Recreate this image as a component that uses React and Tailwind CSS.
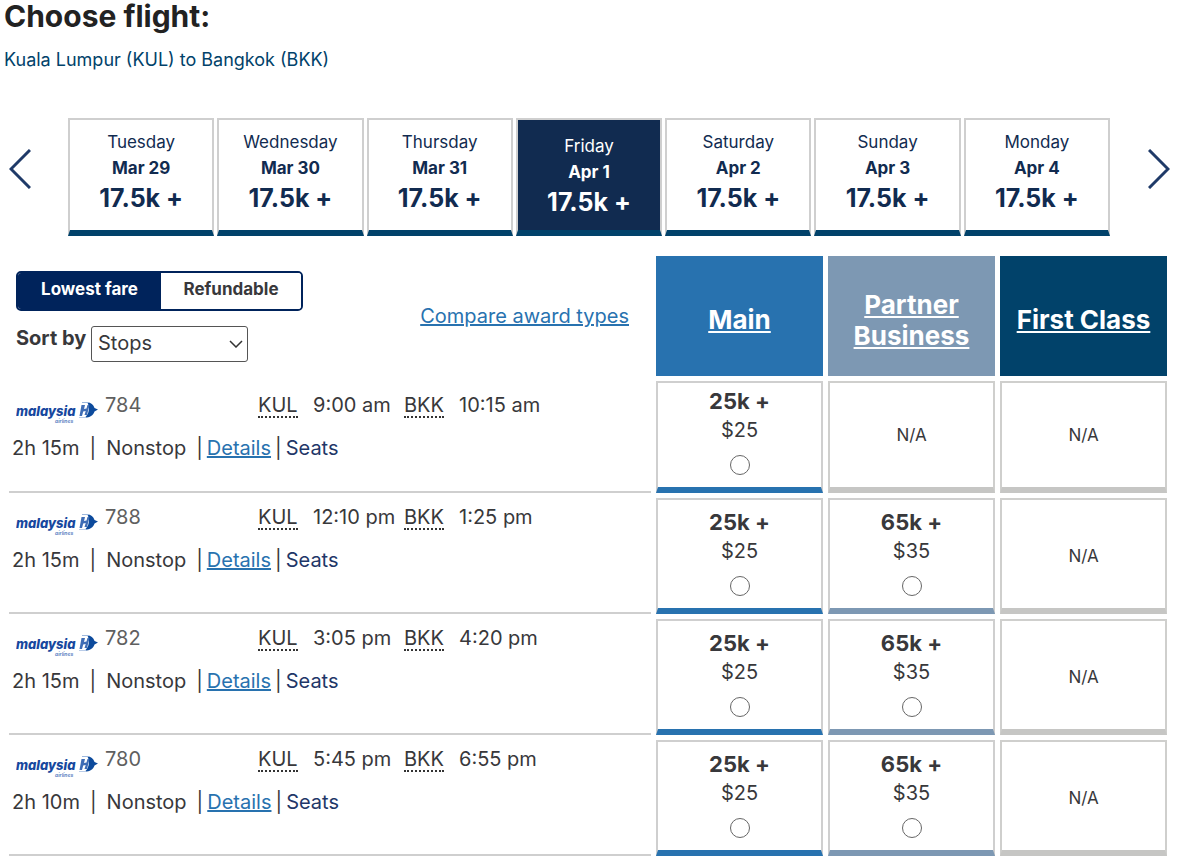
import React, { useState } from 'react';

const dates = [
  { day: 'Tuesday', date: 'Mar 29', price: '17.5k +' },
  { day: 'Wednesday', date: 'Mar 30', price: '17.5k +' },
  { day: 'Thursday', date: 'Mar 31', price: '17.5k +' },
  { day: 'Friday', date: 'Apr 1', price: '17.5k +' },
  { day: 'Saturday', date: 'Apr 2', price: '17.5k +' },
  { day: 'Sunday', date: 'Apr 3', price: '17.5k +' },
  { day: 'Monday', date: 'Apr 4', price: '17.5k +' },
];

const main = { points: '25k +', fee: '$25' };
const business = { points: '65k +', fee: '$35' };

const flights = [
  { number: '784', departs: '9:00 am', arrives: '10:15 am', duration: '2h 15m', main, business: null, first: null },
  { number: '788', departs: '12:10 pm', arrives: '1:25 pm', duration: '2h 15m', main, business, first: null },
  { number: '782', departs: '3:05 pm', arrives: '4:20 pm', duration: '2h 15m', main, business, first: null },
  { number: '780', departs: '5:45 pm', arrives: '6:55 pm', duration: '2h 10m', main, business, first: null },
];

const cabins = [
  { key: 'main', label: 'Main', head: 'bg-[#2872af]', bar: 'border-b-[#2872af]' },
  { key: 'business', label: 'Partner Business', head: 'bg-[#7d98b3]', bar: 'border-b-[#7d98b3]' },
  { key: 'first', label: 'First Class', head: 'bg-[#01426a]', bar: 'border-b-[#01426a]' },
];

const Arrow = ({ points }) => (
  <svg viewBox="0 0 22 40" className="w-[22px] h-10" fill="none" stroke="#1f3a68" strokeWidth="3">
    <polyline points={points} />
  </svg>
);

const MalaysiaLogo = () => (
  <svg viewBox="0 0 84 26" className="w-[84px] h-[26px] mt-2 shrink-0" role="img" aria-label="Malaysia Airlines">
    <text x="0" y="17" fontSize="13" fontWeight="800" fontStyle="italic" fill="#17479e">malaysia</text>
    <text x="39" y="24" fontSize="5" fontWeight="700" fontStyle="italic" fill="#5f86c4">airlines</text>
    <path d="M71 3 C75 3.500 77.500 5.500 78.500 9 L82 10.500 L78.500 12.500 C77 16.500 74 18.500 69 18.500 C73 15 74.500 8 71 3 Z" fill="#0c4a9c" />
    <path d="M66.500 6 L69 6 L68 10 L70.500 9.500 L71.500 6 L73.500 6 L71 16 L68.500 16 L69.700 12 L67.200 12.500 L66 17 L63.500 17 L65.500 6 Z" fill="#3f6db5" />
    <path d="M66 3.500 L73 3.500" fill="none" stroke="#9db8de" />
    <path d="M63 18.500 L70 18.500" fill="none" stroke="#b9cce8" />
  </svg>
);

const DateCard = ({ item, selected, onSelect }) => (
  <button
    type="button"
    onClick={onSelect}
    aria-pressed={selected}
    className={`flex flex-col items-center h-[118px] border-2 border-[#cfcfcf] border-b-6 border-b-[#01426a] ${
      selected ? 'bg-[#112b50] text-white pt-[14px]' : 'bg-white text-[#112b50] pt-[10px]'
    }`}
  >
    <span className="text-[17px] leading-[25px]">{item.day}</span>
    <span className="text-[17px] leading-[26px] font-bold">{item.date}</span>
    <span className="text-[25px] leading-[34px] font-bold">{item.price}</span>
  </button>
);

const FareCell = ({ fare, cabin, flight, short }) => {
  if (!fare) {
    return (
      <td className={`border-2 border-[#cfcfcd] border-b-6 border-b-[#c6c6c4] p-0 text-center align-middle text-[17px] ${short ? 'pt-[2px]' : 'pt-[6px]'}`}>
        N/A
      </td>
    );
  }
  return (
    <td className={`border-2 border-[#cfcfcf] border-b-6 ${cabin.bar} p-0 align-top`}>
      <label className={`flex flex-col items-center ${short ? 'pt-1' : 'pt-2'}`}>
        <span className="text-[22px] leading-[29px] font-bold">{fare.points}</span>
        <span className="text-xl leading-[29px]">{fare.fee}</span>
        <input
          type="radio"
          name="fare"
          aria-label={`${cabin.label} fare on flight ${flight.number}`}
          className="appearance-none size-5 mt-[10px] rounded-full border border-[#666] bg-white checked:border-[6px] checked:border-[#2872af]"
        />
      </label>
    </td>
  );
};

const Airport = ({ code, name }) => (
  <div>
    <abbr title={name} className="inline-block leading-[21px] border-b-2 border-dotted border-[#333] no-underline">
      {code}
    </abbr>
  </div>
);

const FlightRow = ({ flight, first }) => (
  <tr className={first ? 'h-28' : 'h-[116px]'}>
    <td className={`border-b-2 border-[#cfcfcf] p-0 align-top ${first ? 'pt-[10px]' : 'pt-[5px]'}`}>
      <div className="grid grid-cols-[242px_55px_91px_55px_auto] pl-[7px] h-7 text-xl leading-7">
        <div className="flex gap-[5px] text-[#5f5f5f]">
          <MalaysiaLogo />
          {flight.number}
        </div>
        <Airport code="KUL" name="Kuala Lumpur" />
        <div>{flight.departs}</div>
        <Airport code="BKK" name="Bangkok" />
        <div>{flight.arrives}</div>
      </div>
      <div className="flex mt-[15px] pl-[3px] text-xl leading-7">
        <span>{flight.duration}</span>
        <span className="px-[10px]">|</span>
        <span>Nonstop</span>
        <span className="pl-[10px] pr-1">|</span>
        <a href="#details" className="text-[#2872af] underline">Details</a>
        <span className="px-1">|</span>
        <a href="#seats" className="text-[#1f3768]">Seats</a>
      </div>
    </td>
    {cabins.map((cabin) => (
      <FareCell key={cabin.key} fare={flight[cabin.key]} cabin={cabin} flight={flight} short={first} />
    ))}
  </tr>
);

const App = () => {
  const [selected, setSelected] = useState(3);
  const [refundable, setRefundable] = useState(false);

  return (
    <main className="bg-white font-[Inter,sans-serif] text-[#38383b]">
      <header className="pl-1">
        <h1 className="text-3xl leading-8 font-bold text-[#222]">Choose flight:</h1>
        <p className="mt-4 text-lg leading-6 text-[#01426a]">Kuala Lumpur (KUL) to Bangkok (BKK)</p>
      </header>

      <nav className="flex items-start mt-[46px] pl-[9px] pr-[30px]" aria-label="Dates">
        <button type="button" aria-label="Previous dates" className="mt-[31px]">
          <Arrow points="21,1 2,20 21,39" />
        </button>
        <div className="grid grid-cols-7 gap-[3px] flex-1 ml-[37px] mr-[38px]">
          {dates.map((item, index) => (
            <DateCard
              key={item.date}
              item={item}
              selected={index === selected}
              onSelect={() => setSelected(index)}
            />
          ))}
        </div>
        <button type="button" aria-label="Next dates" className="mt-[31px]">
          <Arrow points="1,1 20,20 1,39" />
        </button>
      </nav>

      <div className="pl-1 pr-7 mt-[15px]">
        <table className="w-full table-fixed border-separate border-spacing-[5px]">
          <colgroup>
            <col />
            <col className="w-[167px]" />
            <col className="w-[167px]" />
            <col className="w-[167px]" />
          </colgroup>
          <thead>
            <tr className="h-[120px]">
              <td className="p-0 align-top">
                <div className="flex items-center justify-between pl-[7px] pr-[22px] h-[120px]">
                  <div className="h-full pt-[15px]">
                    <div className="flex w-[287px] h-10 rounded-[5px] border-2 border-[#00235b] overflow-hidden text-[17px] font-bold">
                      <button
                        type="button"
                        onClick={() => setRefundable(false)}
                        className={`w-[143px] pb-[2px] ${refundable ? 'bg-white' : 'bg-[#00235b] text-white'}`}
                      >
                        Lowest fare
                      </button>
                      <button
                        type="button"
                        onClick={() => setRefundable(true)}
                        className={`flex-1 pb-[2px] ${refundable ? 'bg-[#00235b] text-white' : 'bg-white'}`}
                      >
                        Refundable
                      </button>
                    </div>
                    <div className="flex mt-[15px]">
                      <label htmlFor="sort" className="w-[75px] text-xl leading-6 font-bold whitespace-nowrap">Sort by</label>
                      <div className="grid items-center">
                        <select
                          id="sort"
                          className="appearance-none col-start-1 row-start-1 w-[157px] h-9 pl-[6px] pb-[2px] rounded-[3px] border border-[#555] bg-white text-xl"
                        >
                          <option>Stops</option>
                          <option>Price</option>
                          <option>Departure</option>
                        </select>
                        <svg viewBox="0 0 14 8" className="col-start-1 row-start-1 justify-self-end mr-[5px] w-[14px] h-2 pointer-events-none" fill="none" stroke="#333" strokeWidth="1.500">
                          <polyline points="1,1 7,7 13,1" />
                        </svg>
                      </div>
                    </div>
                  </div>
                  <a href="#compare" className="text-xl leading-7 text-[#2872af] underline">Compare award types</a>
                </div>
              </td>
              {cabins.map((cabin) => (
                <th key={cabin.key} scope="col" className={`${cabin.head} p-0 px-2 pt-[7px] align-middle`}>
                  <a href={`#${cabin.key}`} className="block text-[26px] leading-[31px] font-bold text-white underline">
                    {cabin.label}
                  </a>
                </th>
              ))}
            </tr>
          </thead>
          <tbody>
            {flights.map((flight, index) => (
              <FlightRow key={flight.number} flight={flight} first={index === 0} />
            ))}
          </tbody>
        </table>
      </div>
    </main>
  );
};

export default App;
